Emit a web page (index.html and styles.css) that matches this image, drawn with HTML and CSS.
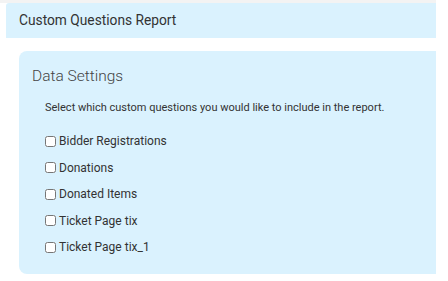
FILE: index.html
```html
<!DOCTYPE html>
<html lang="en">
<head>
  <meta charset="UTF-8" />
  <title>Custom Questions Report</title>
  <link rel="stylesheet" href="styles.css">
</head>
<body>
  <div class="page">
    <div class="page-header">Custom Questions Report</div>

    <div class="settings-card">
      <h2>Data Settings</h2>
      <p class="hint">Select which custom questions you would like to include in the report.</p>

      <label class="option"><input type="checkbox" /> Bidder Registrations</label>
      <label class="option"><input type="checkbox" /> Donations</label>
      <label class="option"><input type="checkbox" /> Donated Items</label>
      <label class="option"><input type="checkbox" /> Ticket Page tix</label>
      <label class="option"><input type="checkbox" /> Ticket Page tix_1</label>
    </div>
  </div>
</body>
</html>
```

FILE: styles.css
```css
body {
  margin: 0;
  background: #fff;
  font-family: Roboto, 'Liberation Sans', sans-serif;
  color: #333;
}

.page {
  width: 436px;
  overflow: hidden;
  background: linear-gradient(#f3f3f3 0, #f3f3f3 3px, #fff 3px);
  padding-top: 3px;
}

.page-header {
  margin-left: 6px;
  height: 35px;
  line-height: 35px;
  padding-left: 13px;
  background: #daf2fe;
  border-top-left-radius: 3px;
  font-size: 13.75px;
  color: #333;
}

.settings-card {
  margin: 13px 0 0 19px;
  padding: 15px 0 15px 13px;
  background: #daf2fe;
  border-radius: 8px 0 0 8px;
  height: 193px;
}

.settings-card h2 {
  margin: 0;
  font-size: 15.5px;
  font-weight: 300;
  color: #444;
  line-height: 20px;
}

.hint {
  margin: 15px 0 13px 13px;
  font-size: 11px;
  line-height: 14px;
  color: #333;
}

.option {
  display: flex;
  align-items: center;
  margin-left: 13px;
  height: 26.5px;
  font-size: 12px;
  color: #333;
}

.option input {
  width: 11px;
  height: 11px;
  margin: 0 3px 0 0;
}
```
